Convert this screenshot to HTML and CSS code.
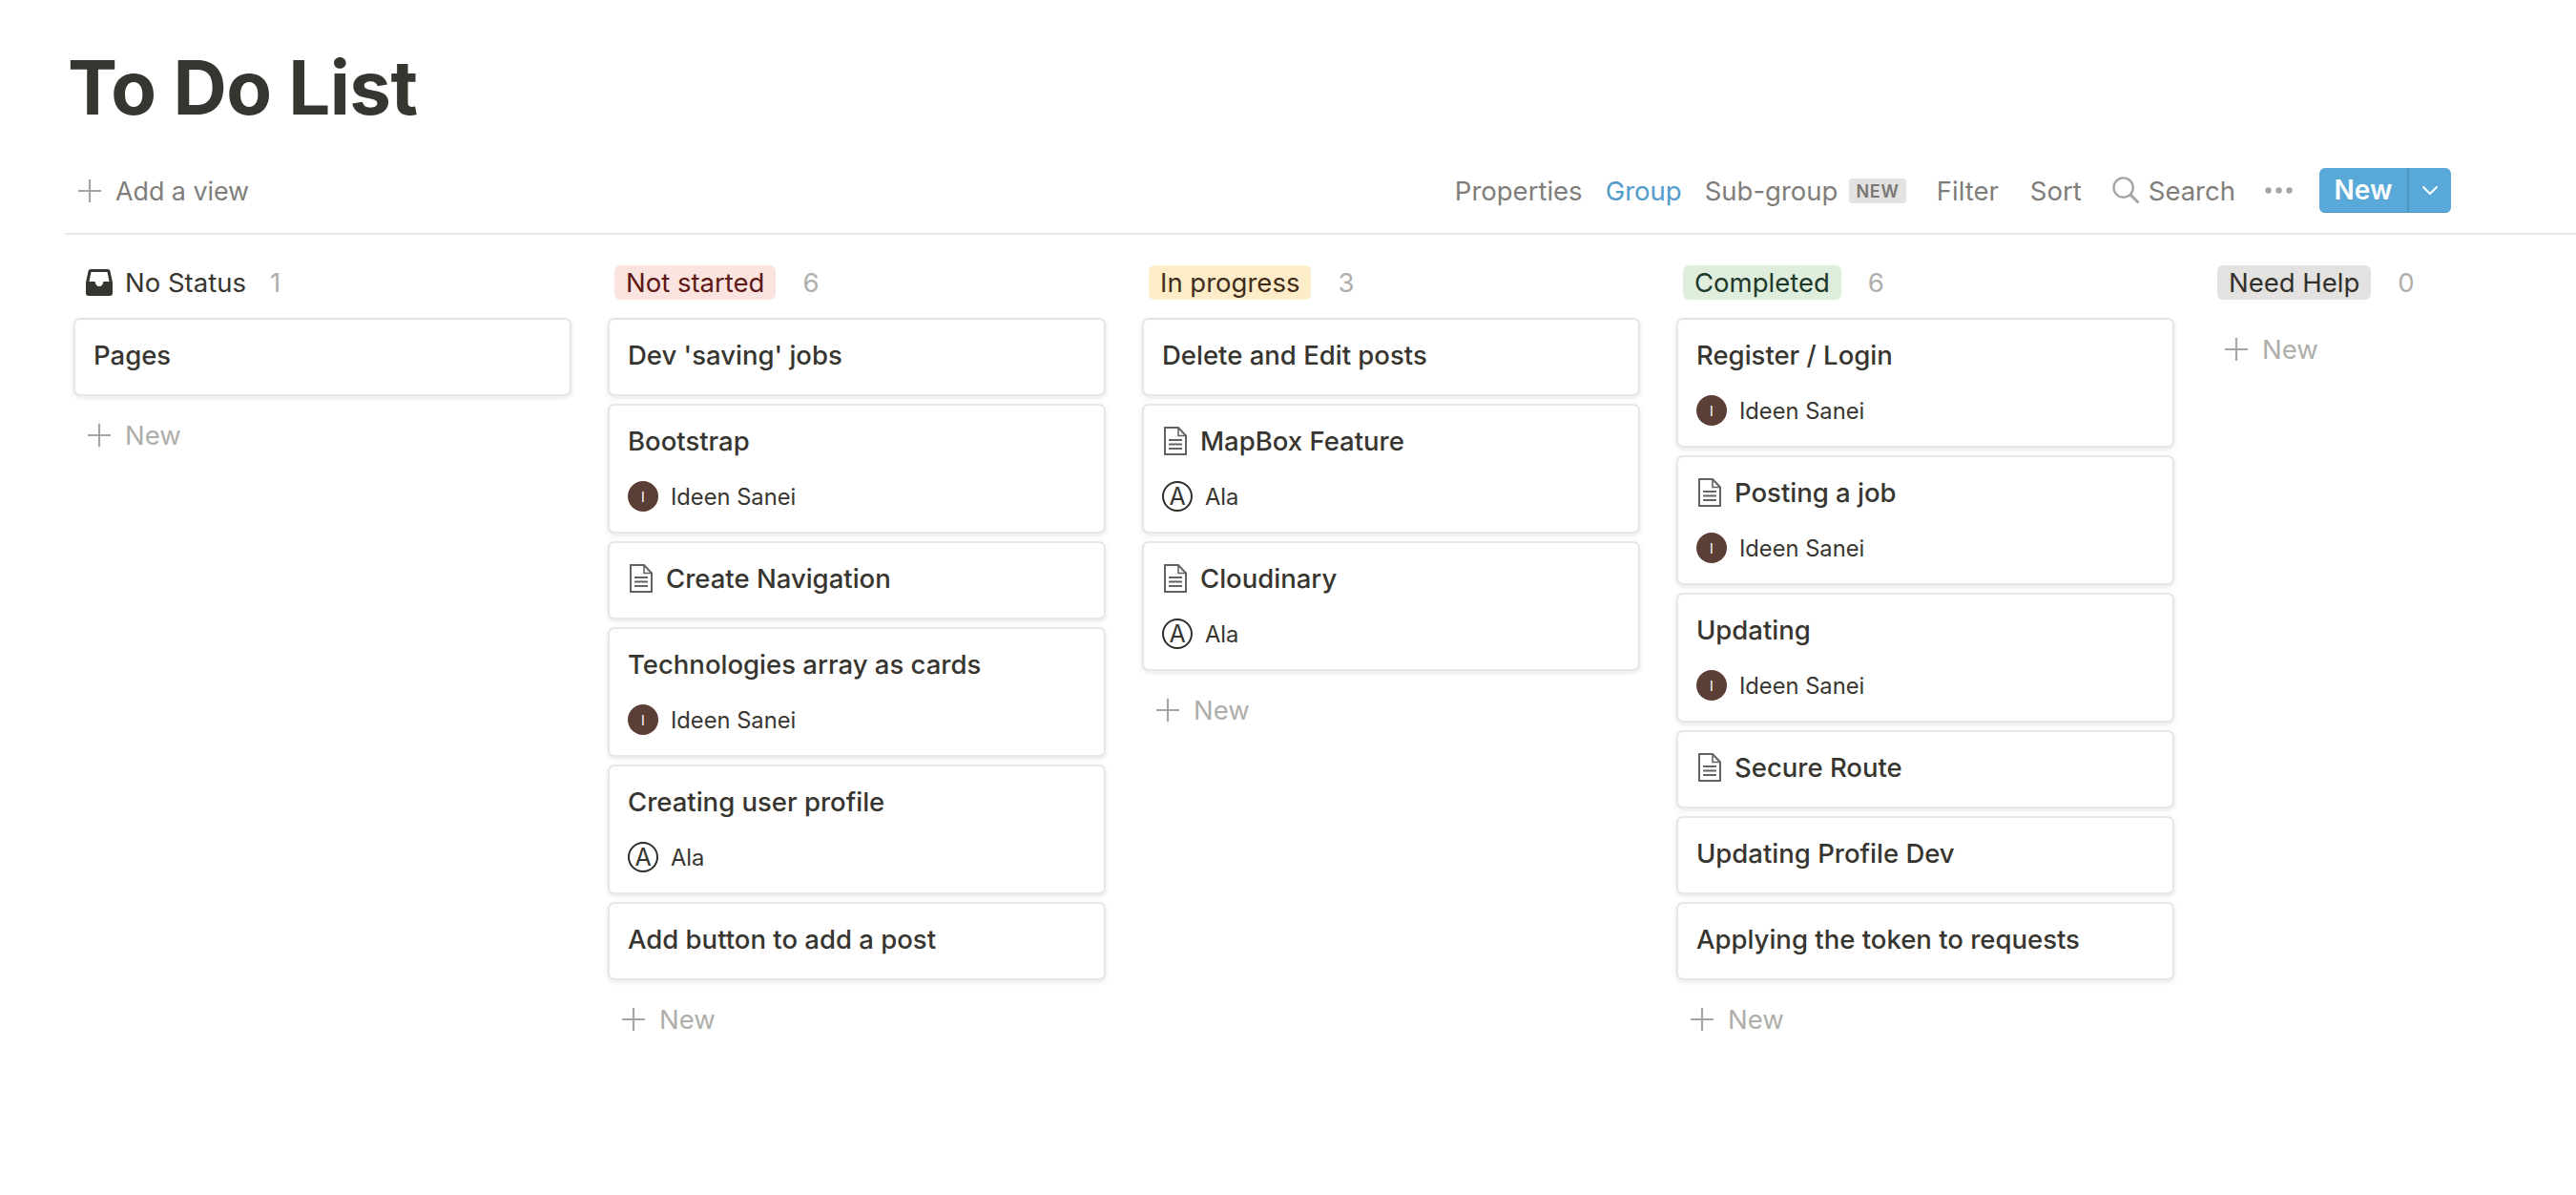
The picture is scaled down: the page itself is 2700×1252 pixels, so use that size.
FILE: index.html
```html
<!DOCTYPE html>
<html lang="en">
<head>
    <meta charset="UTF-8">
    <meta name="viewport" content="width=device-width, initial-scale=1.0">
    <title>To Do List</title>
    <link rel="stylesheet" href="styles.css">
</head>
<body>
    <svg class="defs" width="0" height="0" aria-hidden="true">
        <symbol id="plus" viewBox="0 0 24 24">
            <path d="M12 0V24M0 12H24" fill="none" stroke="currentColor" stroke-width="2.2"/>
        </symbol>
        <symbol id="doc" viewBox="0 0 24 30">
            <path d="M1 1H15L23 9.500V29H1Z" fill="none" stroke="currentColor" stroke-width="2"/>
            <path d="M15 1V9.500H23" fill="none" stroke="currentColor" stroke-width="1.600"/>
            <path d="M5 14H19M5 18.500H19M5 23H19" fill="none" stroke="currentColor" stroke-width="1.800"/>
        </symbol>
    </svg>

    <h1 class="page-title">To Do List</h1>

    <div class="toolbar">
        <div class="add-view">
            <svg class="plus-icon"><use href="#plus"/></svg>
            <span>Add a view</span>
        </div>
        <div class="actions">
            <span>Properties</span>
            <span class="active">Group</span>
            <span class="subgroup">Sub-group <span class="new-badge">NEW</span></span>
            <span class="filter">Filter</span>
            <span class="sort">Sort</span>
            <span class="search">
                <svg class="search-icon" viewBox="0 0 30 30">
                    <circle cx="12" cy="12" r="10.500" fill="none" stroke="currentColor" stroke-width="2.400"/>
                    <path d="M19.500 19.500L28.500 28.500" fill="none" stroke="currentColor" stroke-width="3"/>
                </svg>
                Search
            </span>
            <svg class="more-icon" viewBox="0 0 29 7">
                <circle cx="3.500" cy="3.500" r="3.200"/>
                <circle cx="14.500" cy="3.500" r="3.200"/>
                <circle cx="25.500" cy="3.500" r="3.200"/>
            </svg>
            <div class="new-btn">
                <span class="new-label">New</span>
                <span class="new-arrow">
                    <svg viewBox="0 0 18 11" width="18" height="11">
                        <path d="M1.500 1.500L9 9L16.500 1.500" fill="none" stroke="#fff" stroke-width="2"/>
                    </svg>
                </span>
            </div>
        </div>
    </div>

    <div class="board">
        <section class="column">
            <header class="col-head">
                <svg class="inbox-icon" viewBox="0 0 28 28">
                    <path d="M5 0H23Q25 0 25.500 2L28 14V25Q28 28 25 28H3Q0 28 0 25V14L2.500 2Q3 0 5 0ZM5.500 3L3.500 13H9.500Q10.500 18 14 18Q17.500 18 18.500 13H24.500L22.500 3Z" fill="#37352f" fill-rule="evenodd"/>
                </svg>
                <span class="plain-name">No Status</span>
                <span class="count count-plain">1</span>
            </header>
            <div class="cards">
                <article class="card"><div class="card-title">Pages</div></article>
            </div>
            <div class="add-card"><svg class="plus-icon"><use href="#plus"/></svg><span>New</span></div>
        </section>

        <section class="column">
            <header class="col-head">
                <span class="pill pill-red">Not started</span>
                <span class="count">6</span>
            </header>
            <div class="cards">
                <article class="card"><div class="card-title">Dev 'saving' jobs</div></article>
                <article class="card">
                    <div class="card-title">Bootstrap</div>
                    <div class="person"><span class="avatar avatar-i">I</span>Ideen Sanei</div>
                </article>
                <article class="card">
                    <div class="card-title"><svg class="doc-icon"><use href="#doc"/></svg>Create Navigation</div>
                </article>
                <article class="card">
                    <div class="card-title">Technologies array as cards</div>
                    <div class="person"><span class="avatar avatar-i">I</span>Ideen Sanei</div>
                </article>
                <article class="card">
                    <div class="card-title">Creating user profile</div>
                    <div class="person"><span class="avatar avatar-a">A</span>Ala</div>
                </article>
                <article class="card"><div class="card-title">Add button to add a post</div></article>
            </div>
            <div class="add-card"><svg class="plus-icon"><use href="#plus"/></svg><span>New</span></div>
        </section>

        <section class="column">
            <header class="col-head">
                <span class="pill pill-yellow">In progress</span>
                <span class="count">3</span>
            </header>
            <div class="cards">
                <article class="card"><div class="card-title">Delete and Edit posts</div></article>
                <article class="card">
                    <div class="card-title"><svg class="doc-icon"><use href="#doc"/></svg>MapBox Feature</div>
                    <div class="person"><span class="avatar avatar-a">A</span>Ala</div>
                </article>
                <article class="card">
                    <div class="card-title"><svg class="doc-icon"><use href="#doc"/></svg>Cloudinary</div>
                    <div class="person"><span class="avatar avatar-a">A</span>Ala</div>
                </article>
            </div>
            <div class="add-card"><svg class="plus-icon"><use href="#plus"/></svg><span>New</span></div>
        </section>

        <section class="column">
            <header class="col-head">
                <span class="pill pill-green">Completed</span>
                <span class="count">6</span>
            </header>
            <div class="cards">
                <article class="card">
                    <div class="card-title">Register / Login</div>
                    <div class="person"><span class="avatar avatar-i">I</span>Ideen Sanei</div>
                </article>
                <article class="card">
                    <div class="card-title"><svg class="doc-icon"><use href="#doc"/></svg>Posting a job</div>
                    <div class="person"><span class="avatar avatar-i">I</span>Ideen Sanei</div>
                </article>
                <article class="card">
                    <div class="card-title">Updating</div>
                    <div class="person"><span class="avatar avatar-i">I</span>Ideen Sanei</div>
                </article>
                <article class="card">
                    <div class="card-title"><svg class="doc-icon"><use href="#doc"/></svg>Secure Route</div>
                </article>
                <article class="card"><div class="card-title">Updating Profile Dev</div></article>
                <article class="card"><div class="card-title">Applying the token to requests</div></article>
            </div>
            <div class="add-card"><svg class="plus-icon"><use href="#plus"/></svg><span>New</span></div>
        </section>

        <section class="column">
            <header class="col-head">
                <span class="pill pill-gray">Need Help</span>
                <span class="count">0</span>
            </header>
            <div class="add-card add-card-empty"><svg class="plus-icon"><use href="#plus"/></svg><span>New</span></div>
        </section>
    </div>
</body>
</html>
```

FILE: styles.css
```css
html, body {
    overflow: hidden;
}
body {
    margin: 0;
    height: 1252px;
    background: #ffffff;
    color: #37352f;
    font-family: Inter, "Liberation Sans", sans-serif;
}
.defs {
    position: absolute;
}
.page-title {
    margin: 0;
    padding: 42px 0 0 71px;
    height: 155px;
    box-sizing: border-box;
    font-size: 78px;
    line-height: 100px;
    font-weight: 700;
    letter-spacing: -0.6px;
}

.toolbar {
    display: flex;
    justify-content: space-between;
    align-items: center;
    box-sizing: border-box;
    height: 91px;
    margin-left: 68px;
    padding: 0 131px 0 14px;
    border-bottom: 2px solid #e9e9e7;
    color: #7f7d79;
    font-size: 26.800px;
}
.add-view {
    display: flex;
    align-items: center;
    gap: 15px;
}
.plus-icon {
    width: 24px;
    height: 24px;
    flex: none;
    color: #a6a5a2;
}
.actions {
    display: flex;
    align-items: center;
    gap: 24px;
    font-size: 27.500px;
}
.actions .active {
    color: #529cca;
}
.subgroup {
    display: flex;
    align-items: center;
    gap: 12px;
}
.new-badge {
    padding: 0 7px;
    height: 26px;
    line-height: 27px;
    border-radius: 4px;
    background: #e3e2e0;
    color: #787774;
    font-size: 18px;
    font-weight: 600;
    letter-spacing: 0.800px;
}
.filter {
    margin-left: 8px;
}
.sort {
    margin-left: 9px;
}
.search {
    display: flex;
    align-items: center;
    gap: 9px;
    margin-left: 8px;
}
.search-icon {
    width: 29px;
    height: 29px;
    color: #a6a5a2;
}
.more-icon {
    width: 29px;
    height: 7px;
    margin-left: 7px;
    fill: #a6a5a2;
}
.new-btn {
    display: flex;
    height: 47px;
    width: 138px;
    margin-left: 4px;
    box-sizing: border-box;
    border-radius: 6px;
    border-bottom: 1px solid #4d97c4;
    background: #58a8d8;
    color: #ffffff;
    font-size: 28px;
    font-weight: 600;
}
.new-label {
    display: flex;
    align-items: center;
    justify-content: center;
    width: 92px;
}
.new-arrow {
    display: flex;
    align-items: center;
    justify-content: center;
    flex: 1;
    border-left: 2px solid #4d97c4;
}

.board {
    display: flex;
    gap: 38px;
    margin-left: 77px;
    padding-top: 31px;
}
.column {
    flex: none;
    width: 522px;
}
.col-head {
    display: flex;
    align-items: center;
    height: 38px;
    margin-bottom: 18px;
    padding-left: 7px;
    font-size: 27.500px;
}
.inbox-icon {
    width: 28px;
    height: 28px;
    margin: 0 13px 0 6px;
    flex: none;
}
.pill {
    height: 36px;
    line-height: 36px;
    padding: 0 12px;
    border-radius: 6px;
}
.pill-red {
    background: #fbe4e0;
    color: #5d1715;
}
.pill-yellow {
    background: #fdecc8;
    color: #402c1b;
}
.pill-green {
    background: #dfeddd;
    color: #1c3829;
}
.pill-gray {
    background: #e3e2e0;
    color: #32302c;
}
.count {
    margin-left: 28px;
    color: #aeaeab;
}
.count-plain {
    margin-left: 25px;
}
.cards {
    display: flex;
    flex-direction: column;
    gap: 8px;
}
.card {
    box-sizing: border-box;
    min-height: 82px;
    padding: 0 19px;
    border: 2px solid #e6e6e5;
    border-radius: 7px;
    background: #ffffff;
    box-shadow: 0 2px 5px rgba(15, 15, 15, 0.1);
}
.card-title {
    display: flex;
    align-items: center;
    height: 74px;
    font-size: 27.500px;
    font-weight: 500;
    color: #37352f;
}
.doc-icon {
    width: 24px;
    height: 30px;
    margin: 0 14px 0 2px;
    flex: none;
    color: #65635f;
}
.person {
    display: flex;
    align-items: center;
    gap: 13px;
    height: 32px;
    margin: 5px 0 21px;
    font-size: 23.700px;
}
.avatar {
    display: flex;
    align-items: center;
    justify-content: center;
    box-sizing: border-box;
    width: 32px;
    height: 32px;
    border-radius: 50%;
    flex: none;
}
.avatar-i {
    background: #5b3f37;
    color: #ffffff;
    font-size: 14px;
}
.avatar-a {
    border: 2px solid #2f2d28;
    font-size: 25px;
    font-weight: 400;
}
.add-card {
    display: flex;
    align-items: center;
    gap: 15px;
    height: 42px;
    margin-top: 20px;
    padding-left: 15px;
    color: #aeaeab;
    font-size: 27.500px;
}
.add-card-empty {
    margin-top: 30px;
}
```
